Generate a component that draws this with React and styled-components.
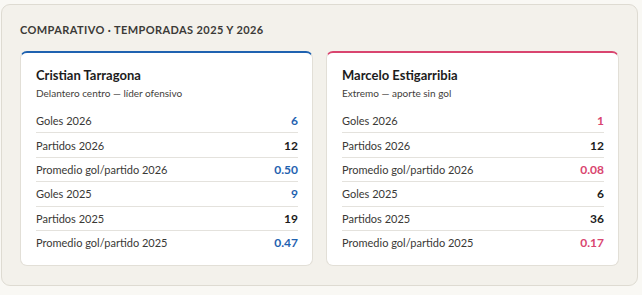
import React from 'react';
import styled, { createGlobalStyle } from 'styled-components';

const GlobalStyle = createGlobalStyle`
  html, body {
    margin: 0;
    padding: 0;
    background: #f9f8f4;
    font-family: Lato, "Liberation Sans", sans-serif;
  }
`;

const players = [
  {
    name: 'Cristian Tarragona',
    role: 'Delantero centro — líder ofensivo',
    accent: '#1f62b0',
    stats: [
      { label: 'Goles 2026', value: '6', hl: true },
      { label: 'Partidos 2026', value: '12' },
      { label: 'Promedio gol/partido 2026', value: '0.50', hl: true },
      { label: 'Goles 2025', value: '9', hl: true },
      { label: 'Partidos 2025', value: '19' },
      { label: 'Promedio gol/partido 2025', value: '0.47', hl: true },
    ],
  },
  {
    name: 'Marcelo Estigarribia',
    role: 'Extremo — aporte sin gol',
    accent: '#d9456f',
    stats: [
      { label: 'Goles 2026', value: '1', hl: true },
      { label: 'Partidos 2026', value: '12' },
      { label: 'Promedio gol/partido 2026', value: '0.08', hl: true },
      { label: 'Goles 2025', value: '6' },
      { label: 'Partidos 2025', value: '36' },
      { label: 'Promedio gol/partido 2025', value: '0.17', hl: true },
    ],
  },
];

const App = () => {
  return (
    <Page>
      <GlobalStyle />
      <Panel>
        <Heading>Comparativo · Temporadas 2025 y 2026</Heading>
        <Grid>
          {players.map((p) => (
            <Card key={p.name} $accent={p.accent}>
              <Name>{p.name}</Name>
              <Role>{p.role}</Role>
              <StatList>
                {p.stats.map((s) => (
                  <StatRow key={s.label}>
                    <StatLabel>{s.label}</StatLabel>
                    <StatValue $color={s.hl ? p.accent : '#1c1c1c'}>{s.value}</StatValue>
                  </StatRow>
                ))}
              </StatList>
            </Card>
          ))}
        </Grid>
      </Panel>
    </Page>
  );
};

const Page = styled.div`
  padding: 4px 4px 0 1px;
`;

const Panel = styled.div`
  background: #f3f1eb;
  border: 1px solid #dedbd2;
  border-radius: 9px;
  padding: 18px 18px 19px 18px;
`;

const Heading = styled.h2`
  margin: 0 0 15px 0;
  font-size: 11px;
  font-weight: 700;
  text-transform: uppercase;
  letter-spacing: 0.4px;
  color: #3b3a37;
`;

const Grid = styled.div`
  display: grid;
  grid-template-columns: 1fr 1fr;
  gap: 13px;
`;

const Card = styled.div`
  background: #fff;
  border: 1px solid #e2dfd7;
  border-top: 2px solid ${(p) => p.$accent};
  border-radius: 7px;
  padding: 14px 14px 11px 15px;
`;

const Name = styled.div`
  font-size: 13px;
  font-weight: 700;
  color: #1c1c1c;
  line-height: 17px;
`;

const Role = styled.div`
  font-size: 10px;
  color: #3f3e3b;
  margin-top: 3px;
  margin-bottom: 10px;
`;

const StatList = styled.div`
  display: flex;
  flex-direction: column;
`;

const StatRow = styled.div`
  display: flex;
  justify-content: space-between;
  align-items: center;
  height: 23.4px;
  border-bottom: 1px solid #e4e2dd;

  &:last-child {
    border-bottom: none;
  }
`;

const StatLabel = styled.span`
  font-size: 11px;
  color: #3a3936;
`;

const StatValue = styled.span`
  font-size: 12px;
  font-weight: 700;
  color: ${(p) => p.$color};
`;

export default App;
